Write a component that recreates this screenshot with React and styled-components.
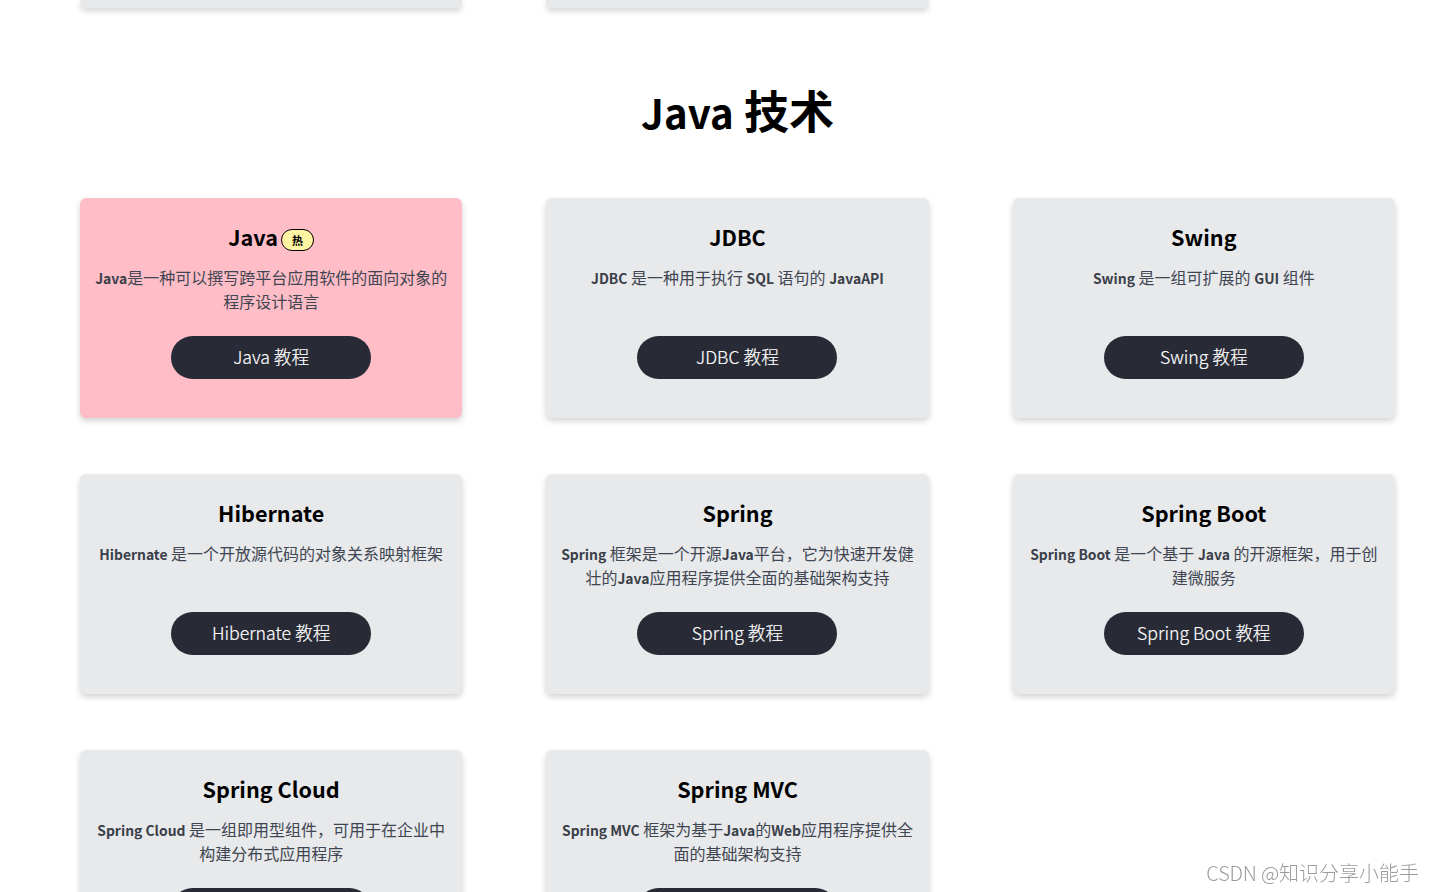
import styled, { createGlobalStyle } from "styled-components";

const GlobalStyle = createGlobalStyle`
  html, body {
    margin: 0;
    padding: 0;
    background: #fff;
    overflow: hidden;
  }
  body {
    font-family: "Noto Sans CJK SC", "Noto Sans", sans-serif;
    color: #000;
  }
`;

const Page = styled.div`
  position: relative;
  height: 892px;
  overflow: hidden;
  padding: 0 39px 0 80px;
`;

const StubRow = styled.div`
  display: grid;
  grid-template-columns: repeat(3, 1fr);
  column-gap: 84px;
`;

const Stub = styled.div`
  height: 8px;
  background: #e7e9eb;
  border-radius: 0 0 6px 6px;
  box-shadow: 0 3px 6px rgba(0, 0, 0, 0.18);
`;

const Heading = styled.h2`
  margin: 0;
  padding-top: 71px;
  height: 119px;
  font-size: 45px;
  line-height: 62px;
  font-weight: 700;
  text-align: center;
  span {
    font-size: 40.2px;
  }
`;

const Grid = styled.div`
  display: grid;
  grid-template-columns: repeat(3, 1fr);
  column-gap: 84px;
  row-gap: 56px;
`;

const Card = styled.div`
  height: 220px;
  box-sizing: border-box;
  padding: 23px 14px 0;
  background: ${(p) => (p.$hot ? "#ffbdc7" : "#e7e9eb")};
  border-radius: 6px;
  box-shadow: 0 3px 6px rgba(0, 0, 0, 0.18);
  display: flex;
  flex-direction: column;
  align-items: center;
  text-align: center;
`;

const Title = styled.h3`
  margin: 0;
  font-size: 21.6px;
  line-height: 32px;
  font-weight: 700;
  display: flex;
  align-items: center;
  gap: 3px;
`;

const Badge = styled.span`
  box-sizing: border-box;
  width: 33px;
  height: 22px;
  margin-top: 5px;
  border: 1px solid #000;
  border-radius: 11px;
  background: #fff4a3;
  font-size: 11px;
  line-height: 20px;
  font-weight: 700;
  text-align: center;
`;

const Desc = styled.p`
  margin: 12px 0 0;
  height: 48px;
  font-size: 16px;
  line-height: 24px;
  color: #3f4652;
  b {
    font-size: 13.9px;
    line-height: 1;
    font-weight: 700;
    color: #3a3f49;
  }
`;

const Button = styled.a`
  margin-top: 23px;
  width: 200px;
  height: 43px;
  flex: none;
  border-radius: 22px;
  background: #282a35;
  color: #fff;
  font-size: 17.7px;
  font-weight: 300;
  -webkit-text-stroke: 0.2px #fff;
  line-height: 41px;
  text-align: center;
`;

const Watermark = styled.div`
  position: absolute;
  right: 15px;
  bottom: 4px;
  font-size: 20px;
  font-weight: 300;
  line-height: 30px;
  color: #9c9c9c;
  filter: blur(0.3px);
  span {
    letter-spacing: -0.2px;
  }
`;

const cards = [
  { title: "Java", hot: true, desc: [["Java"], "是一种可以撰写跨平台应用软件的面向对象的程序设计语言"], btn: "Java 教程" },
  { title: "JDBC", desc: [["JDBC"], " 是一种用于执行 ", ["SQL"], " 语句的 ", ["JavaAPI"]], btn: "JDBC 教程" },
  { title: "Swing", desc: [["Swing"], " 是一组可扩展的 ", ["GUI"], " 组件"], btn: "Swing 教程" },
  { title: "Hibernate", desc: [["Hibernate"], " 是一个开放源代码的对象关系映射框架"], btn: "Hibernate 教程" },
  { title: "Spring", desc: [["Spring"], " 框架是一个开源", ["Java"], "平台，它为快速开发健壮的", ["Java"], "应用程序提供全面的基础架构支持"], btn: "Spring 教程" },
  { title: "Spring Boot", desc: [["Spring Boot"], " 是一个基于 ", ["Java"], " 的开源框架，用于创建微服务"], btn: "Spring Boot 教程" },
  { title: "Spring Cloud", desc: [["Spring Cloud"], " 是一组即用型组件，可用于在企业中构建分布式应用程序"], btn: "Spring Cloud 教程" },
  { title: "Spring MVC", desc: [["Spring MVC"], " 框架为基于", ["Java"], "的", ["Web"], "应用程序提供全面的基础架构支持"], btn: "Spring MVC 教程" },
];

export default function App() {
  return (
    <Page>
      <GlobalStyle />
      <StubRow>
        <Stub />
        <Stub />
      </StubRow>
      <Heading><span>Java</span> 技术</Heading>
      <Grid>
        {cards.map((c) => (
          <Card key={c.title} $hot={c.hot}>
            <Title>
              {c.title}
              {c.hot && <Badge>热</Badge>}
            </Title>
            <Desc>
              {c.desc.map((part, i) =>
                Array.isArray(part) ? <b key={i}>{part[0]}</b> : part
              )}
            </Desc>
            <Button>{c.btn}</Button>
          </Card>
        ))}
      </Grid>
      <Watermark><span>CSDN @</span>知识分享小能手</Watermark>
    </Page>
  );
}
